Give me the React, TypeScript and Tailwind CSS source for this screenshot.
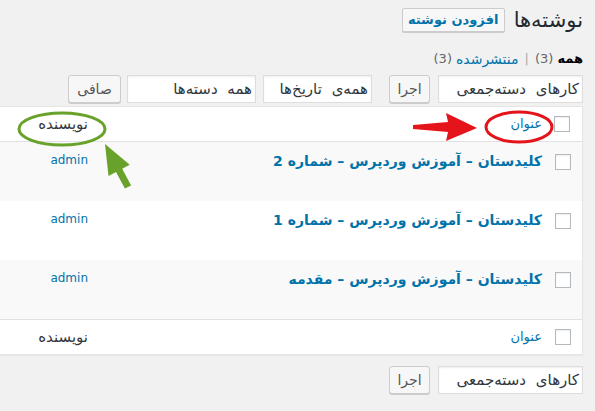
import React from "react";

const posts = [
  "کلیدستان – آموزش وردپرس – شماره 2",
  "کلیدستان – آموزش وردپرس – شماره 1",
  "کلیدستان – آموزش وردپرس – مقدمه",
];

function Checkbox() {
  return <span className="block w-[16px] h-[16px] bg-white border border-[#b4b9be] shadow-[inset_0_1px_2px_rgba(0,0,0,0.07)]" />;
}

function Select({ label, width }: { label: string; width: string }) {
  return (
    <div className={`${width} h-[28px] bg-white border border-[#ddd] shadow-[inset_0_1px_2px_rgba(0,0,0,0.07)] flex items-center pr-[3px] text-[15px] [word-spacing:5px] text-[#32373c] whitespace-nowrap overflow-hidden`}>
      {label}
    </div>
  );
}

function Btn({ label, width }: { label: string; width: string }) {
  return (
    <div className={`${width} h-[28px] bg-[#f7f7f7] border border-[#ccc] rounded-[3px] shadow-[0_1px_0_#ccc] flex items-center justify-center text-[14px] text-[#555]`}>
      {label}
    </div>
  );
}

export default function App() {
  return (
    <div dir="rtl" className="relative w-[595px] h-[411px] overflow-hidden bg-[#f1f1f1] font-['DejaVu_Sans',sans-serif] text-[#444]">
      <div className="pr-[12px] pt-[7px]">
        {/* page title */}
        <div className="flex items-center h-[26px]">
          <h1 className="text-[21px] leading-[26px] text-[#23282d]">نوشته‌ها</h1>
          <div className="mr-[9px] h-[24px] w-[103px] bg-[#f7f7f7] border border-[#ccc] rounded-[2px] shadow-[0_1px_0_#ccc] flex items-center justify-center text-[13px] font-bold text-[#0073aa]">
            افزودن نوشته
          </div>
        </div>

        {/* status filters */}
        <div className="mt-[17px] h-[18px] flex items-center text-[13px] text-[#666] whitespace-nowrap">
          <span className="font-bold text-[#000]">همه</span>
          <span className="mr-[4px]">(3)</span>
          <span className="mx-[6px] text-[#aaa]">|</span>
          <span className="text-[#0073aa] text-[14px]">منتشرشده</span>
          <span className="mr-[4px]">(3)</span>
        </div>

        {/* top bulk actions and filters */}
        <div className="mt-[7px] flex items-center">
          <Select label="کارهای دسته‌جمعی" width="w-[145px]" />
          <div className="mr-[8px]"><Btn label="اجرا" width="w-[41px]" /></div>
          <div className="mr-[17px]"><Select label="همه‌ی تاریخ‌ها" width="w-[109px]" /></div>
          <div className="mr-[7px]"><Select label="همه دسته‌ها" width="w-[129px]" /></div>
          <div className="mr-[6px]"><Btn label="صافی" width="w-[53px]" /></div>
        </div>

        {/* posts table */}
        <div className="mt-[3px] -ml-[1px] bg-white border border-[#e5e5e5] shadow-[0_1px_1px_rgba(0,0,0,0.04)]">
          <div className="h-[35px] flex items-center border-b border-[#e1e1e1]">
            <div className="w-[40px] flex justify-end pl-[12px] pr-[11px]"><Checkbox /></div>
            <div className="flex-1 text-[13px] text-[#0073aa]">عنوان</div>
            <div className="w-[98px] text-[15px] text-[#32373c] pr-[10px]">نویسنده</div>
          </div>
          {posts.map((t, i) => (
            <div key={t} className={`h-[59px] flex items-start ${i % 2 === 0 ? "bg-[#f9f9f9]" : "bg-white"}`}>
              <div className="w-[40px] pt-[12px] pr-[11px]"><Checkbox /></div>
              <div className="flex-1 pt-[9px] text-[14px] font-bold text-[#0073aa] whitespace-nowrap">{t}</div>
              <div dir="ltr" className="w-[98px] pt-[9px] text-[12px] text-[#0073aa] text-right pr-[10px]">admin</div>
            </div>
          ))}
          <div className="h-[35px] flex items-center border-t border-[#e1e1e1]">
            <div className="w-[40px] pr-[11px]"><Checkbox /></div>
            <div className="flex-1 text-[13px] text-[#0073aa]">عنوان</div>
            <div className="w-[98px] text-[15px] text-[#32373c] pr-[10px]">نویسنده</div>
          </div>
        </div>

        {/* bottom bulk actions */}
        <div className="mt-[11px] flex items-center">
          <Select label="کارهای دسته‌جمعی" width="w-[145px]" />
          <div className="mr-[8px]"><Btn label="اجرا" width="w-[41px]" /></div>
        </div>
      </div>

      {/* callout marks */}
      <svg className="absolute inset-0 pointer-events-none" width="595" height="411" viewBox="0 0 595 411">
        <ellipse cx="519" cy="127" rx="33" ry="15" fill="none" stroke="#e5141b" strokeWidth="3" />
        <polygon points="413,125 448,122 446,113 477,128 446,141 448,132 413,129" fill="#e5141b" />
        <ellipse cx="62" cy="129" rx="43" ry="16" fill="none" stroke="#68a22a" strokeWidth="3" />
        <polygon points="105,144 129.7,164.8 122.2,168.8 131.1,185.4 124.9,188.6 116,172 108.5,176" fill="#68a22a" />
      </svg>
    </div>
  );
}
